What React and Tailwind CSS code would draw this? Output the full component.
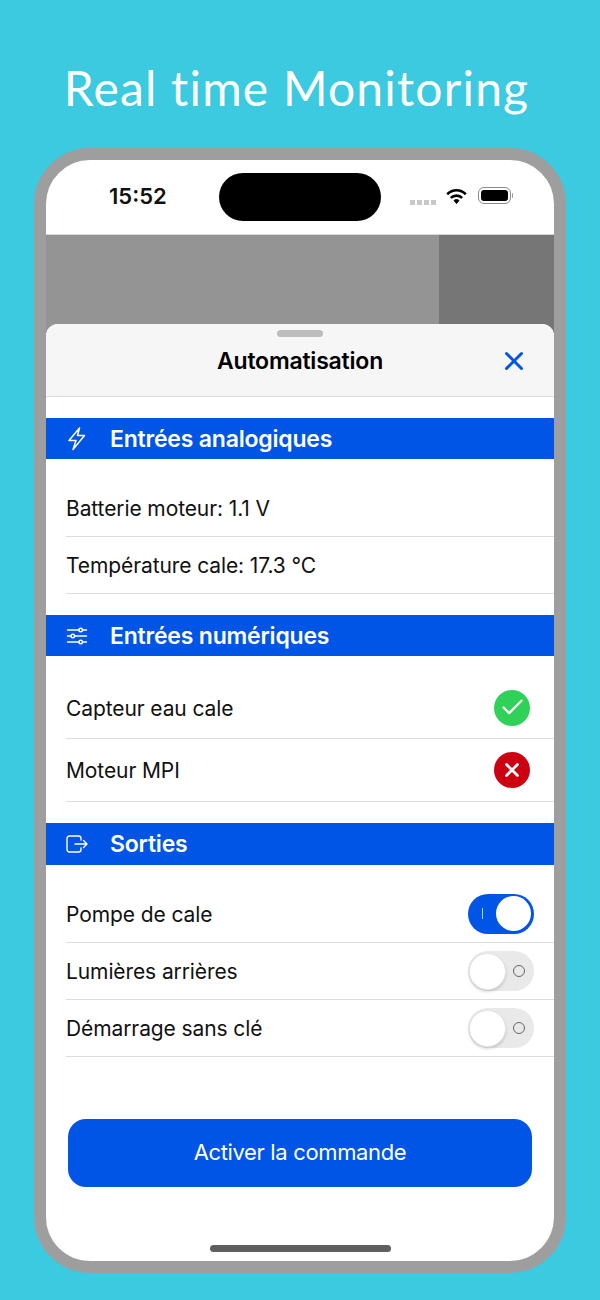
import React from 'react';
import { X, Check } from 'lucide-react';

const SF = 'font-["Inter","Liberation_Sans",sans-serif]';

function BoltIcon() {
  return (
    <svg width="18" height="24" viewBox="0 0 18 24" fill="none" stroke="white" strokeWidth="1.5" strokeLinejoin="round">
      <path d="M11.500 1 1 13.500H8L5 22.500 16.500 8.500H9.500Z" />
    </svg>
  );
}

function SlidersIcon() {
  return (
    <svg width="22" height="22" viewBox="0 0 22 22" fill="none" stroke="white" strokeWidth="1.4" strokeLinecap="round">
      <path d="M1.5 5h11.5M16.5 5h4M1.5 11h3.5M8.5 11h12M1.5 17h11.5M16.5 17h4" />
      <circle cx="14.7" cy="5" r="1.8" />
      <circle cx="6.8" cy="11" r="1.8" />
      <circle cx="14.7" cy="17" r="1.8" />
    </svg>
  );
}

function ExitIcon() {
  return (
    <svg width="22" height="22" viewBox="0 0 22 22" fill="none" stroke="white" strokeWidth="1.4" strokeLinecap="round" strokeLinejoin="round">
      <path d="M15 7V5.500A2.500 2.500 0 0 0 12.500 3H3.500A2.500 2.500 0 0 0 1 5.500v11A2.500 2.500 0 0 0 3.500 19h9a2.500 2.500 0 0 0 2.500-2.500V15" />
      <path d="M9 11h12M17.500 7.500 21 11l-3.500 3.500" />
    </svg>
  );
}

function StatusIcons() {
  return (
    <div className="flex items-start">
      <div className="flex gap-[2px] mt-[13px] mr-[10px]">
        {[0, 1, 2, 3].map((i) => (
          <span key={i} className="w-[5px] h-[5px] bg-[#c8c8c8]" />
        ))}
      </div>
      <svg width="21" height="17" viewBox="0 0 21 17" fill="none" stroke="black" strokeWidth="2.6" className="mr-[11px] mt-[1px]">
        <path d="M1.200 6.200C6.500 1 14.500 1 19.800 6.200" />
        <path d="M4.800 9.900C8 6.800 13 6.800 16.200 9.900" />
        <path d="M8 12.500 10.500 15.500 13 12.500C11.500 11.200 9.500 11.200 8 12.500Z" fill="black" strokeWidth="1" />
      </svg>
      <div className="flex items-center">
        <div className="w-[33px] h-[17px] rounded-[6px] border border-[#8a8a8a] p-[2px]">
          <div className="w-full h-full rounded-[3px] bg-black" />
        </div>
        <div className="w-[1.5px] h-[5px] bg-[#999] rounded-r ml-[1px]" />
      </div>
    </div>
  );
}

function SectionHeader({ icon, title, height }) {
  return (
    <div className={`flex items-center bg-[#0055e6] text-white pl-[20px] ${height}`}>
      <div className="w-[22px] flex justify-center mr-[22px]">{icon}</div>
      <span className="pt-[1px] text-[23px] font-semibold tracking-[-0.2px]">{title}</span>
    </div>
  );
}

function Row({ label, height, children }) {
  return (
    <div className={`flex items-center justify-between ml-[20px] pr-[20px] border-b border-[#dedede] ${height}`}>
      <span className="pt-[2px] text-[21px] text-[#111] tracking-[-0.1px]">{label}</span>
      {children}
    </div>
  );
}

function Toggle({ on }) {
  if (on) {
    return (
      <div className="w-[66px] h-[40px] rounded-full bg-[#0055e6] flex items-center justify-end px-[3px] relative">
        <span className="absolute left-[14px] top-[14px] w-[1px] h-[11px] bg-white/70" />
        <span className="w-[35px] h-[35px] rounded-full bg-white" />
      </div>
    );
  }
  return (
    <div className="w-[66px] h-[40px] rounded-full bg-[#e9e9e9] flex items-center px-[1px] relative">
      <span className="w-[37px] h-[37px] rounded-full bg-white border border-[#e4e4e4] shadow-[0_2px_3px_rgba(0,0,0,0.15)]" />
      <span className="absolute right-[9px] top-[14px] w-[12px] h-[12px] rounded-full border border-[#666]" />
    </div>
  );
}

export default function App() {
  return (
    <div className={`w-[600px] h-[1300px] bg-[#3bcadf] overflow-hidden ${SF}`}>
      <div className='h-[148px] flex items-center justify-center pt-[28px] pr-[7px] text-white text-[48px] font-["Lato",sans-serif] tracking-[1.2px]'>
        Real time Monitoring
      </div>

      <div className="mx-[34px] h-[1125px] border-[12px] border-[#9e9e9e] rounded-[56px] bg-white overflow-hidden flex flex-col">
        {/* status bar */}
        <div className="h-[75px] shrink-0 flex items-start justify-between pl-[63px] pr-[41px] relative border-b border-[#d8d8d8]">
          <span className="mt-[23px] text-[22px] leading-[26px] font-semibold text-[#111]">15:52</span>
          <div className="absolute left-[173px] top-[13px] w-[162px] h-[48px] rounded-full bg-black" />
          <div className="mt-[27px]"><StatusIcons /></div>
        </div>

        {/* dimmed page behind the sheet */}
        <div className="h-[89px] shrink-0 flex bg-[#949494]">
          <div className="flex-1" />
          <div className="w-[115px] bg-[#767676]" />
        </div>

        {/* sheet */}
        <div className="flex-1 flex flex-col bg-[linear-gradient(to_right,#949494_393px,#767676_393px)]">
          <div className="flex-1 flex flex-col bg-white rounded-t-[12px] overflow-hidden">
            <div className="h-[73px] shrink-0 bg-[#f6f6f6] border-b border-[#dcdcdc] relative flex items-center justify-center">
              <span className="absolute top-[6px] left-[231px] w-[46px] h-[7px] rounded-full bg-[#bdbdbd]" />
              <span className="pt-[2px] text-[23px] font-semibold text-black tracking-[-0.2px]">Automatisation</span>
              <X className="absolute right-[25px] top-[22px] text-[#0055e6]" size={30} strokeWidth={2.4} />
            </div>

            <div className="h-[21px] shrink-0" />
            <SectionHeader height="h-[41px]" title="Entrées analogiques" icon={<BoltIcon />} />
            <div className="h-[21px] shrink-0" />
            <Row height="h-[57px]" label="Batterie moteur: 1.1 V" />
            <Row height="h-[57px]" label="Température cale: 17.3 °C" />

            <div className="h-[21px] shrink-0" />
            <SectionHeader height="h-[41px]" title="Entrées numériques" icon={<SlidersIcon />} />
            <div className="h-[21px] shrink-0" />
            <Row height="h-[62px]" label="Capteur eau cale">
              <div className="w-[36px] h-[36px] rounded-full bg-[#30d158] flex items-center justify-center mr-[4px]">
                <Check size={27} color="white" strokeWidth={2} />
              </div>
            </Row>
            <Row height="h-[63px]" label="Moteur MPI">
              <div className="w-[36px] h-[36px] rounded-full bg-[#cc0011] flex items-center justify-center mr-[4px]">
                <X size={22} color="white" strokeWidth={3} />
              </div>
            </Row>

            <div className="h-[21px] shrink-0" />
            <SectionHeader height="h-[42px]" title="Sorties" icon={<ExitIcon />} />
            <div className="h-[20px] shrink-0" />
            <Row height="h-[58px]" label="Pompe de cale"><Toggle on /></Row>
            <Row height="h-[57px]" label="Lumières arrières"><Toggle /></Row>
            <Row height="h-[57px]" label="Démarrage sans clé"><Toggle /></Row>

            <button className="mt-[62px] mx-[22px] h-[68px] shrink-0 rounded-[18px] bg-[#0055e6] text-white text-[22px] tracking-[-0.35px] pb-[2px]">
              Activer la commande
            </button>

            <div className="flex-1 flex items-end justify-center pb-[9px]">
              <span className="w-[181px] h-[7px] rounded-full bg-[#5f5f5f]" />
            </div>
          </div>
        </div>
      </div>
    </div>
  );
}
